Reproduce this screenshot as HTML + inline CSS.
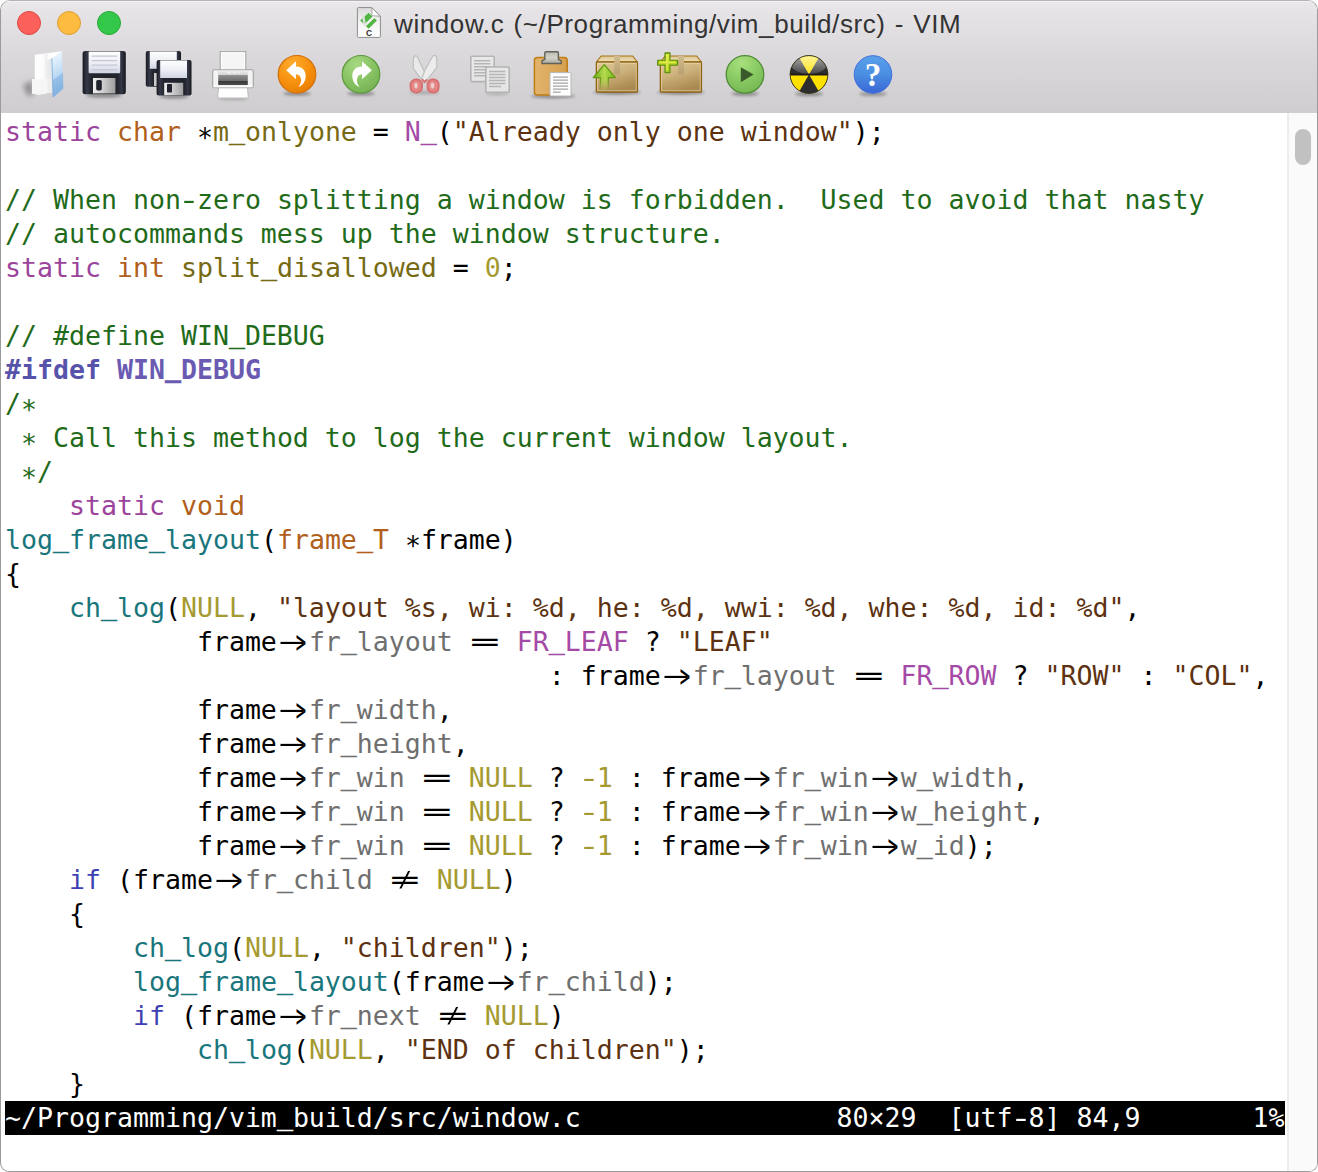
<!DOCTYPE html>
<html lang="en">
<head>
<meta charset="utf-8">
<title>window.c (~/Programming/vim_build/src) - VIM</title>
<style>
html,body{margin:0;padding:0;background:#fff;}
body{width:1318px;height:1172px;overflow:hidden;position:relative;}
#win{position:absolute;left:0;top:0;width:1316px;height:1170px;border:1px solid #9b9b9b;border-top-color:#b4b4b4;border-radius:10px 10px 9px 9px;overflow:hidden;background:#fff;}
#chrome{position:absolute;left:0;top:0;width:1316px;height:112px;background:linear-gradient(#ebe9eb 0px,#e6e4e6 8px,#d9d7d9 60px,#cfcdcf 112px);box-shadow:inset 0 1px 0 #f4f3f4;}
.tl{position:absolute;top:10px;width:24px;height:24px;border-radius:50%;box-sizing:border-box;}
#tl1{left:16px;background:#fc605b;border:1px solid #df4744;}
#tl2{left:56px;background:#fdbc40;border:1px solid #de9f34;}
#tl3{left:96px;background:#34c84a;border:1px solid #27aa35;}
#title{position:absolute;left:393px;top:7px;height:32px;line-height:32px;font-family:"Liberation Sans",sans-serif;font-size:26px;color:#333;white-space:pre;letter-spacing:0.6px;word-spacing:1.4px;}
#tbsvg{position:absolute;left:-1px;top:-1px;}
#text{position:absolute;left:4px;top:114px;width:1280px;font-family:"DejaVu Sans Mono","Liberation Mono",monospace;font-size:26.575px;line-height:34px;color:#000;font-variant-ligatures:none;}
.ln{height:34px;width:1280px;overflow:visible;white-space:pre;}
.sl{background:#000;color:#fff;}
.u,.as{font-style:normal;position:relative;}
.u{top:-2px;-webkit-text-stroke:0.5px currentColor;}
.as{top:6px;}
.hy{font-style:normal;display:inline-block;transform:scaleX(1.4);}
.lg{display:inline-block;width:32px;height:34px;position:relative;vertical-align:top;}
.lg i{position:absolute;left:0;top:0;width:32px;height:34px;text-align:center;font-style:normal;transform-origin:16px 17px;}
.a1{transform:translate(-1px,-1px) scale(3.4,1);}
.a2{transform:translate(8px,0px) scale(0.65,1.2);}
.e1{transform:translate(0px,0.4px) scale(1.86,1);}
.e2{transform:translate(0px,0px) scale(0.85,0.8);}
#sb{position:absolute;left:1286px;top:112px;width:30px;height:1060px;background:#fafafa;border-left:2px solid #ececec;box-sizing:border-box;}
#knob{position:absolute;left:1294px;top:128px;width:16px;height:36px;border-radius:8px;background:#c1c1c1;}
.st{color:#9c449c}
.ty{color:#b0601c}
.id{color:#776a14}
.mc{color:#a44aa6}
.str{color:#5c3211}
.cm{color:#1f6b1a}
.nu{color:#a59a32}
.pp{color:#5752aa}
.pd{color:#6a5ab2}
.fn{color:#19767c}
.mb{color:#6f6f6f}
.kw{color:#3f3fb4}
</style>
</head>
<body>
<div id="win">
<div id="chrome">
<div class="tl" id="tl1"></div><div class="tl" id="tl2"></div><div class="tl" id="tl3"></div>
<div id="title">window.c (~/Programming/vim_build/src) - VIM</div>
<svg id="tbsvg" width="1318" height="112" viewBox="0 0 1318 112">
<defs>
<filter id="b1" x="-30%" y="-100%" width="160%" height="300%"><feGaussianBlur stdDeviation="1.6"/></filter>
<filter id="b2" x="-50%" y="-50%" width="200%" height="200%"><feGaussianBlur stdDeviation="2.5"/></filter>
<linearGradient id="gBlue" x1="0" y1="0" x2="0.15" y2="1"><stop offset="0" stop-color="#f6fbff"/><stop offset="0.25" stop-color="#ddeefb"/><stop offset="0.6" stop-color="#b9d8f3"/><stop offset="1" stop-color="#8fbde8"/></linearGradient>
<linearGradient id="gWhite" x1="0" y1="0" x2="1" y2="0"><stop offset="0" stop-color="#ffffff"/><stop offset="0.7" stop-color="#fbfbfb"/><stop offset="1" stop-color="#e9e9e9"/></linearGradient>
<linearGradient id="gLabel" x1="0" y1="0" x2="0" y2="1"><stop offset="0" stop-color="#ffffff"/><stop offset="0.6" stop-color="#e9ecf3"/><stop offset="1" stop-color="#cfd5e2"/></linearGradient>
<linearGradient id="gFloppy" x1="0" y1="0" x2="1" y2="0"><stop offset="0" stop-color="#171920"/><stop offset="0.1" stop-color="#363a48"/><stop offset="0.2" stop-color="#24262f"/><stop offset="0.8" stop-color="#22242d"/><stop offset="0.9" stop-color="#343745"/><stop offset="1" stop-color="#15171d"/></linearGradient>
<linearGradient id="gShut" x1="0" y1="0" x2="1" y2="0"><stop offset="0" stop-color="#efefef"/><stop offset="0.5" stop-color="#c9c9c9"/><stop offset="1" stop-color="#9e9e9e"/></linearGradient>
<linearGradient id="gSlot" x1="0" y1="0" x2="0" y2="1"><stop offset="0" stop-color="#e6e6e6"/><stop offset="0.24" stop-color="#d4d4d4"/><stop offset="0.28" stop-color="#909090"/><stop offset="0.68" stop-color="#6b6b6b"/><stop offset="0.71" stop-color="#383838"/><stop offset="0.93" stop-color="#4c4c4c"/><stop offset="0.96" stop-color="#c4c4c4"/><stop offset="1" stop-color="#e0e0e0"/></linearGradient>
<radialGradient id="gOrange" cx="0.38" cy="0.25" r="0.8"><stop offset="0" stop-color="#ffab2e"/><stop offset="0.6" stop-color="#f6900d"/><stop offset="0.92" stop-color="#ea8106"/><stop offset="1" stop-color="#d9740a"/></radialGradient>
<radialGradient id="gGreen" cx="0.38" cy="0.25" r="0.8"><stop offset="0" stop-color="#a6d982"/><stop offset="0.6" stop-color="#86c162"/><stop offset="0.92" stop-color="#78b455"/><stop offset="1" stop-color="#65a246"/></radialGradient>
<radialGradient id="gGreen2" cx="0.4" cy="0.2" r="0.85"><stop offset="0" stop-color="#a8e07e"/><stop offset="0.55" stop-color="#88c962"/><stop offset="0.9" stop-color="#79ba55"/><stop offset="1" stop-color="#5d9c40"/></radialGradient>
<linearGradient id="gHelp" x1="0" y1="0" x2="0" y2="1"><stop offset="0" stop-color="#5aa0ea"/><stop offset="0.5" stop-color="#4a8ee2"/><stop offset="1" stop-color="#3a66d6"/></linearGradient>
<linearGradient id="gBoxF" x1="0" y1="0" x2="0.4" y2="1"><stop offset="0" stop-color="#e0cb9a"/><stop offset="0.5" stop-color="#cbb07a"/><stop offset="1" stop-color="#aa8a50"/></linearGradient>
<linearGradient id="gBoxT" x1="0" y1="0" x2="0" y2="1"><stop offset="0" stop-color="#dcc594"/><stop offset="1" stop-color="#efe0b9"/></linearGradient>
<linearGradient id="gTape" x1="0" y1="0" x2="0" y2="1"><stop offset="0" stop-color="#d2bb8c"/><stop offset="1" stop-color="#b99f72"/></linearGradient>
<linearGradient id="gArrow" x1="0" y1="0" x2="1" y2="0"><stop offset="0" stop-color="#6aa516"/><stop offset="0.5" stop-color="#b4dc4e"/><stop offset="1" stop-color="#79b41c"/></linearGradient>
<linearGradient id="gStem" x1="0" y1="0" x2="0" y2="1"><stop offset="0" stop-color="#fff" stop-opacity="1"/><stop offset="1" stop-color="#fff" stop-opacity="0"/></linearGradient>
<mask id="mStem"><rect x="590" y="60" width="30" height="34" fill="url(#gStemM)"/></mask>
<linearGradient id="gStemM" x1="0" y1="60" x2="0" y2="94" gradientUnits="userSpaceOnUse"><stop offset="0" stop-color="#fff"/><stop offset="0.5" stop-color="#fff"/><stop offset="0.92" stop-color="#000"/></linearGradient>
<linearGradient id="gPlus" x1="0" y1="0" x2="0" y2="1"><stop offset="0" stop-color="#e2ea3a"/><stop offset="1" stop-color="#9fc414"/></linearGradient>
<linearGradient id="gClipb" x1="0" y1="0" x2="1" y2="0"><stop offset="0" stop-color="#e2b36c"/><stop offset="1" stop-color="#d6a050"/></linearGradient>
<linearGradient id="gClip" x1="0" y1="0" x2="0" y2="1"><stop offset="0" stop-color="#b9b9ae"/><stop offset="0.5" stop-color="#d3d3ca"/><stop offset="1" stop-color="#a9a99f"/></linearGradient>
<linearGradient id="gGloss" x1="0" y1="0" x2="0" y2="1"><stop offset="0" stop-color="#fff" stop-opacity="0.75"/><stop offset="1" stop-color="#fff" stop-opacity="0.12"/></linearGradient>
<clipPath id="cRad"><circle cx="809" cy="74.5" r="18.6"/></clipPath>
</defs>


<!-- doc icon -->
<g>
<linearGradient id="gDoc" x1="0" y1="0" x2="0" y2="1"><stop offset="0" stop-color="#dcdcdc"/><stop offset="0.55" stop-color="#f4f4f4"/><stop offset="1" stop-color="#ffffff"/></linearGradient>
<path d="M358.4,7.6 H371.8 L380.4,16.2 V36.4 Q380.4,37.4 379.4,37.4 H358.4 Q357.4,37.4 357.4,36.4 V8.6 Q357.4,7.6 358.4,7.6 Z" fill="url(#gDoc)" stroke="#8c8c8c" stroke-width="1"/>
<path d="M368.6,12.8 L376.9,20.6 L368.6,28.7 L360.2,20.6 Z" fill="#4fb543"/>
<path d="M375.6,13.6 L377.4,15.2 L365.6,26.6 L363.8,25 Z" fill="#f1f1f1"/>
<path d="M361.6,14.6 L364.2,14.2 L366.2,25.4 L363.8,26.4 Z" fill="#e3e3e3" opacity="0.9"/>
<path d="M371.8,7.8 L380.2,16.2 L373.2,15.8 C372.2,15.6 372,15 372,14.2 Z" fill="#ffffff" stroke="#8f8f8f" stroke-width="0.8" stroke-linejoin="round"/>
<text x="369" y="35.8" text-anchor="middle" font-family="'Liberation Sans',sans-serif" font-weight="bold" font-size="8.4" fill="#2e2e2e">C</text>
</g>

<!-- 1: open folder -->
<g>
<path d="M23,85 L33,80 L33,95.5 L27,95.5 Z" fill="#000" opacity="0.3" filter="url(#b2)"/>
<path d="M34.9,54.9 L61.6,51.2 L62,60 L52.6,92 L38.9,94.7 L32.2,93.6 L32,79.2 L34.9,78.9 Z" fill="#ffffff"/>
<path d="M34.9,54.9 L47.4,53.2 L47.4,79.4 L34.9,78.9 Z" fill="url(#gWhite)"/>
<path d="M47.3,59.9 L51.7,58.2 L52.4,80 L47.4,79.6 Z" fill="#e9eaeb"/>
<path d="M32,79.2 L47.4,79.6 L52.6,80 L52.8,92 L38.9,94.7 L32.2,93.6 Z" fill="#f6f6f6"/>
<path d="M47.4,79.6 L52.6,80 L52.8,92 L47.6,93 Z" fill="#ededee"/>
<path d="M51.6,58 L61.9,51 L63.3,88.5 L53,97.4 Z" fill="url(#gBlue)"/>
<path d="M52.5,80.6 L63,72.6 L63.3,88.5 L53,97.4 Z" fill="#6fa4dc" opacity="0.45"/>
<path d="M51.8,58.4 L53.1,97" stroke="#7aa9da" stroke-width="0.9" opacity="0.9"/>
</g>

<!-- 2: floppy -->
<g>
<ellipse cx="104" cy="95.5" rx="18" ry="2" fill="#000" opacity="0.35" filter="url(#b1)"/>
<rect x="82.6" y="51" width="43.2" height="43.2" rx="2.5" fill="url(#gFloppy)"/>
<rect x="88.6" y="51.6" width="31.6" height="21.6" rx="1" fill="url(#gLabel)"/>
<g stroke="#c3c8d3" stroke-width="1.3"><path d="M91.5,56.2H117.2M91.5,60.6H117.2M91.5,65.2H117.2M91.5,69.8H117.2"/></g>
<rect x="93" y="78" width="22.4" height="15.4" fill="url(#gShut)"/>
<rect x="96.2" y="80" width="5.6" height="10.4" rx="1.6" fill="#1f222c"/>
</g>

<!-- 3: save all (two floppies) -->
<g>
<ellipse cx="174" cy="96.6" rx="15" ry="2" fill="#000" opacity="0.35" filter="url(#b1)"/>
<rect x="145.8" y="51" width="35.2" height="35.8" rx="2" fill="url(#gFloppy)"/>
<rect x="149.8" y="51.4" width="27" height="17.4" fill="url(#gLabel)"/>
<rect x="154" y="73" width="6" height="13" fill="#c9c9c9"/>
<rect x="156.6" y="60" width="34.9" height="35.6" rx="2" fill="url(#gFloppy)"/>
<rect x="160.2" y="60.4" width="26.8" height="17.6" fill="url(#gLabel)"/>
<rect x="164.2" y="82.8" width="19" height="12.4" fill="url(#gShut)"/>
<rect x="167" y="84" width="5" height="8.6" rx="0.8" fill="#1f222c"/>
</g>

<!-- 4: printer -->
<g>
<ellipse cx="233" cy="98.6" rx="15" ry="1.2" fill="#000" opacity="0.25" filter="url(#b1)"/>
<rect x="220.2" y="51.6" width="25.6" height="20" fill="#f5f5f5" stroke="#adadad" stroke-width="1.2"/>
<rect x="221.4" y="52.8" width="23.2" height="17" fill="none" stroke="#fff" stroke-width="0.8"/>
<path d="M218.6,87 L247.4,87 L248.4,98 L217.6,98 Z" fill="#fefefe" stroke="#bdbdbd" stroke-width="1"/>
<rect x="212.7" y="69.7" width="40.6" height="18" rx="1.8" fill="#f3f3f3" stroke="#a2a2a2" stroke-width="1.1"/>
<rect x="218.2" y="71.3" width="29.6" height="14.4" fill="url(#gSlot)"/>
<path d="M227,72.8H231M232.4,72.8H236.4M237.8,72.8H239.8" stroke="#fff" stroke-width="1" opacity="0.8"/>
<path d="M213.4,86.4H252.6" stroke="#fff" stroke-width="1.6" opacity="0.9"/>
</g>

<!-- 5: undo -->
<g>
<ellipse cx="297" cy="93.6" rx="14" ry="2" fill="#000" opacity="0.35" filter="url(#b1)"/>
<circle cx="297" cy="74.3" r="18.8" fill="url(#gOrange)" stroke="#d26f0a" stroke-width="1.2"/>
<path d="M286.2,70.2 L296,61.2 L296,66.6 C303.5,66.8 306.2,72 305.6,77.4 C305,82.4 302,85.6 298.2,87 C300.8,84 302,80.6 300.4,77.2 C299.4,75 297.8,74.2 296,74.2 L296,79.2 Z" fill="#fff"/>
</g>

<!-- 6: redo -->
<g>
<ellipse cx="361" cy="93.6" rx="14" ry="2" fill="#000" opacity="0.35" filter="url(#b1)"/>
<circle cx="361" cy="74.3" r="18.8" fill="url(#gGreen)" stroke="#5a983c" stroke-width="1.2"/>
<path d="M371.8,70.2 L362,61.2 L362,66.6 C354.5,66.8 351.8,72 352.4,77.4 C353,82.4 356,85.6 359.8,87 C357.2,84 356,80.6 357.6,77.2 C358.6,75 360.2,74.2 362,74.2 L362,79.2 Z" fill="#fff"/>
</g>

<!-- 7: cut (disabled) -->
<g>
<ellipse cx="424.5" cy="92.6" rx="15" ry="1.6" fill="#000" opacity="0.22" filter="url(#b1)"/>
<path d="M415.5,55.8 C414,56.2 413.3,57.8 413.3,60 L413.3,68.2 L421.6,79.6 L426.4,78 L425.2,73.4 L417.8,57.8 C417.1,56.2 416.2,55.6 415.5,55.8 Z" fill="#e9e9e9" stroke="#bcbcbc" stroke-width="1.1" stroke-linejoin="round"/>
<path d="M434.2,55.5 C433.2,55.5 432.6,56.2 432.1,57.2 L424.8,70.4 L421.8,78.6 L424.8,81.4 L428.6,78.2 L436.8,67.4 L436.8,59 C436.8,57 435.6,55.5 434.2,55.5 Z" fill="#ececec" stroke="#bcbcbc" stroke-width="1.1" stroke-linejoin="round"/>
<path d="M422,79.4 L424.6,82 L427.2,79.6" fill="none" stroke="#d67272" stroke-width="2"/>
<rect x="410.4" y="79.4" width="11.8" height="13.2" rx="5.4" fill="#e28484" stroke="#d66e6e" stroke-width="1.6"/>
<rect x="427.4" y="79.4" width="11.4" height="13.2" rx="5.2" fill="#e28484" stroke="#d66e6e" stroke-width="1.6"/>
<rect x="414.2" y="82.8" width="3.4" height="5.6" rx="1.5" fill="#ecd6d6" stroke="#eda2a2" stroke-width="0.9"/>
<rect x="430.8" y="82.8" width="3.4" height="5.6" rx="1.5" fill="#ecd6d6" stroke="#eda2a2" stroke-width="0.9"/>
</g>

<!-- 8: copy (disabled) -->
<g opacity="0.55">
<ellipse cx="497" cy="93.6" rx="12" ry="1.6" fill="#000" opacity="0.3" filter="url(#b1)"/>
<rect x="470.8" y="56.2" width="23.4" height="25.4" rx="1" fill="#f6f6f6" stroke="#9a9a9a" stroke-width="1.6"/>
<g stroke="#9c9c9c" stroke-width="1.5"><path d="M474,60.8H490.4M474,63.8H490.4M474,66.8H490.4M474,69.8H490.4M474,72.8H490.4M474,75.8H490.4"/></g>
<rect x="485.8" y="67" width="23.4" height="25.2" rx="1" fill="#f6f6f6" stroke="#9a9a9a" stroke-width="1.6"/>
<g stroke="#9c9c9c" stroke-width="1.5"><path d="M489,71.4H505.4M489,74.4H505.4M489,77.4H505.4M489,80.4H505.4M489,83.4H505.4M489,86.4H501"/></g>
</g>

<!-- 9: paste -->
<g>
<ellipse cx="553" cy="96.2" rx="22" ry="2" fill="#000" opacity="0.35" filter="url(#b1)"/>
<rect x="534.4" y="57.4" width="32.8" height="37.6" rx="3" fill="url(#gClipb)" stroke="#bf7c12" stroke-width="1.5"/>
<path d="M546,51.7 H557.2 Q558.4,51.7 558.4,52.9 V59.4 L561.2,61 V63.5 H542 V61 L544.8,59.4 V52.9 Q544.8,51.7 546,51.7 Z" fill="url(#gClip)" stroke="#62625a" stroke-width="1.4"/>
<rect x="550" y="72.6" width="21" height="23.4" rx="0.8" fill="#fdfdfd" stroke="#b7b7b7" stroke-width="1"/>
<g stroke="#a4a4a4" stroke-width="1.3"><path d="M553,77.2H568M553,80.2H568M553,83.2H568M553,86.2H568M553,89.2H568M553,92.2H560.6"/></g>
</g>

<!-- 10: package + up arrow -->
<g>
<ellipse cx="617" cy="92.6" rx="24" ry="1.8" fill="#000" opacity="0.4" filter="url(#b1)"/>
<path d="M601.2,56 H632.6 L637.4,62 H596.4 Z" fill="url(#gBoxT)" stroke="#a87414" stroke-width="1.2" stroke-linejoin="round"/>
<rect x="596.4" y="62" width="41" height="30" rx="1" fill="url(#gBoxF)" stroke="#8f6210" stroke-width="1.4"/>
<rect x="597.6" y="63.2" width="38.6" height="27.6" fill="none" stroke="#f2e4bd" stroke-width="0.8" opacity="0.7"/>
<path d="M614.2,56 H620 V74.6 H614.2 Z" fill="url(#gTape)"/>
<g mask="url(#mStem)">
<path d="M604.3,64.6 L615.4,77.6 L608.4,77.6 L608.4,91 L600.4,91 L600.4,77.6 L593.2,77.6 Z" fill="url(#gArrow)" stroke="#5f9910" stroke-width="1.2" stroke-linejoin="round"/>
</g>
</g>

<!-- 11: package + plus -->
<g>
<ellipse cx="681" cy="92.6" rx="24" ry="1.8" fill="#000" opacity="0.4" filter="url(#b1)"/>
<path d="M665.2,56 H696.6 L701.4,62 H660.4 Z" fill="url(#gBoxT)" stroke="#a87414" stroke-width="1.2" stroke-linejoin="round"/>
<rect x="660.4" y="62" width="41" height="30" rx="1" fill="url(#gBoxF)" stroke="#8f6210" stroke-width="1.4"/>
<rect x="661.6" y="63.2" width="38.6" height="27.6" fill="none" stroke="#f2e4bd" stroke-width="0.8" opacity="0.7"/>
<path d="M678.2,56 H684 V74.6 H678.2 Z" fill="url(#gTape)"/>
<path d="M665.2,53 H669.8 V60.4 H677.4 V65 H669.8 V72.6 H665.2 V65 H657.8 V60.4 H665.2 Z" fill="#5a8d0b" stroke="#5a8d0b" stroke-width="1.5" stroke-linejoin="round"/>
<path d="M665.9,53.9 H669.1 V61.1 H676.5 V64.3 H669.1 V71.7 H665.9 V64.3 H658.7 V61.1 H665.9 Z" fill="url(#gPlus)" stroke="#c6e03c" stroke-width="0.5" stroke-linejoin="round"/>
<path d="M667,54.6 V70.8" stroke="#eef45a" stroke-width="1.3" opacity="0.9"/><path d="M659.4,62.4 H675.8" stroke="#eef45a" stroke-width="1.1" opacity="0.7"/>
</g>

<!-- 12: play -->
<g>
<ellipse cx="745" cy="93.8" rx="14" ry="2" fill="#000" opacity="0.35" filter="url(#b1)"/>
<circle cx="745" cy="74.4" r="18.8" fill="url(#gGreen2)" stroke="#4f8c36" stroke-width="1.3"/>
<path d="M740.8,67.2 L753.6,74.6 L740.8,82.2 Z" fill="#3b5a2b"/>
</g>

<!-- 13: radiation -->
<g>
<ellipse cx="809" cy="94" rx="14" ry="2" fill="#000" opacity="0.35" filter="url(#b1)"/>
<circle cx="809" cy="74.5" r="19.2" fill="#2c2c2c"/>
<g clip-path="url(#cRad)">
<rect x="789" y="54" width="40" height="41" fill="#2e2e2e"/>
<path d="M809,74.5 L797,53.7 L821,53.7 Z" fill="#ffe100"/>
<path d="M809,74.5 L785,74.5 L797,95.3 Z" fill="#ffe100"/>
<path d="M809,74.5 L833,74.5 L821,95.3 Z" fill="#ffe100"/>
<path d="M789,73.6H829V75.4H789Z" fill="#1c1c1c"/>
<ellipse cx="809" cy="62" rx="19" ry="12" fill="url(#gGloss)"/>
</g>
<circle cx="809" cy="74.5" r="18.9" fill="none" stroke="#3a3300" stroke-width="0.8" opacity="0.7"/>
</g>

<!-- 14: help -->
<g>
<ellipse cx="873" cy="94" rx="14" ry="2" fill="#000" opacity="0.3" filter="url(#b1)"/>
<circle cx="873" cy="74.5" r="18.8" fill="url(#gHelp)" stroke="#3f6fdc" stroke-width="1"/>
<text x="873" y="86.4" text-anchor="middle" font-family="'Liberation Serif','DejaVu Serif',serif" font-weight="bold" font-size="33" fill="#fff">?</text>
</g>
</svg>

</div>
<div id="text">
<div class="ln"><span class="st">static</span> <span class="ty">char</span> <i class="as">*</i><span class="id">m<i class="u">_</i>onlyone</span> = <span class="mc">N<i class="u">_</i></span>(<span class="str">"Already only one window"</span>);</div>
<div class="ln"> </div>
<div class="ln"><span class="cm">// When non<i class="hy">-</i>zero splitting a window is forbidden.  Used to avoid that nasty</span></div>
<div class="ln"><span class="cm">// autocommands mess up the window structure.</span></div>
<div class="ln"><span class="st">static</span> <span class="ty">int</span> <span class="id">split<i class="u">_</i>disallowed</span> = <span class="nu">0</span>;</div>
<div class="ln"> </div>
<div class="ln"><span class="cm">// #define WIN<i class="u">_</i>DEBUG</span></div>
<div class="ln"><b><span class="pp">#ifdef</span> <span class="pd">WIN<i class="u">_</i>DEBUG</span></b></div>
<div class="ln"><span class="cm">/<i class="as">*</i></span></div>
<div class="ln"><span class="cm"> <i class="as">*</i> Call this method to log the current window layout.</span></div>
<div class="ln"><span class="cm"> <i class="as">*</i>/</span></div>
<div class="ln">    <span class="st">static</span> <span class="ty">void</span></div>
<div class="ln"><span class="fn">log<i class="u">_</i>frame<i class="u">_</i>layout</span>(<span class="ty">frame<i class="u">_</i>T</span> <i class="as">*</i>frame)</div>
<div class="ln">{</div>
<div class="ln">    <span class="fn">ch<i class="u">_</i>log</span>(<span class="nu">NULL</span>, <span class="str">"layout %s, wi: %d, he: %d, wwi: %d, whe: %d, id: %d"</span>,</div>
<div class="ln">            frame<span class="lg ar"><i class="a1">-</i><i class="a2">&gt;</i></span><span class="mb">fr<i class="u">_</i>layout</span> <span class="lg eq"><i class="e1">=</i></span> <span class="mc">FR<i class="u">_</i>LEAF</span> ? <span class="str">"LEAF"</span></div>
<div class="ln">                                  : frame<span class="lg ar"><i class="a1">-</i><i class="a2">&gt;</i></span><span class="mb">fr<i class="u">_</i>layout</span> <span class="lg eq"><i class="e1">=</i></span> <span class="mc">FR<i class="u">_</i>ROW</span> ? <span class="str">"ROW"</span> : <span class="str">"COL"</span>,</div>
<div class="ln">            frame<span class="lg ar"><i class="a1">-</i><i class="a2">&gt;</i></span><span class="mb">fr<i class="u">_</i>width</span>,</div>
<div class="ln">            frame<span class="lg ar"><i class="a1">-</i><i class="a2">&gt;</i></span><span class="mb">fr<i class="u">_</i>height</span>,</div>
<div class="ln">            frame<span class="lg ar"><i class="a1">-</i><i class="a2">&gt;</i></span><span class="mb">fr<i class="u">_</i>win</span> <span class="lg eq"><i class="e1">=</i></span> <span class="nu">NULL</span> ? <span class="nu"><i class="hy">-</i>1</span> : frame<span class="lg ar"><i class="a1">-</i><i class="a2">&gt;</i></span><span class="mb">fr<i class="u">_</i>win</span><span class="lg ar"><i class="a1">-</i><i class="a2">&gt;</i></span><span class="mb">w<i class="u">_</i>width</span>,</div>
<div class="ln">            frame<span class="lg ar"><i class="a1">-</i><i class="a2">&gt;</i></span><span class="mb">fr<i class="u">_</i>win</span> <span class="lg eq"><i class="e1">=</i></span> <span class="nu">NULL</span> ? <span class="nu"><i class="hy">-</i>1</span> : frame<span class="lg ar"><i class="a1">-</i><i class="a2">&gt;</i></span><span class="mb">fr<i class="u">_</i>win</span><span class="lg ar"><i class="a1">-</i><i class="a2">&gt;</i></span><span class="mb">w<i class="u">_</i>height</span>,</div>
<div class="ln">            frame<span class="lg ar"><i class="a1">-</i><i class="a2">&gt;</i></span><span class="mb">fr<i class="u">_</i>win</span> <span class="lg eq"><i class="e1">=</i></span> <span class="nu">NULL</span> ? <span class="nu"><i class="hy">-</i>1</span> : frame<span class="lg ar"><i class="a1">-</i><i class="a2">&gt;</i></span><span class="mb">fr<i class="u">_</i>win</span><span class="lg ar"><i class="a1">-</i><i class="a2">&gt;</i></span><span class="mb">w<i class="u">_</i>id</span>);</div>
<div class="ln">    <span class="kw">if</span> (frame<span class="lg ar"><i class="a1">-</i><i class="a2">&gt;</i></span><span class="mb">fr<i class="u">_</i>child</span> <span class="lg ne"><i class="e1">=</i><i class="e2">/</i></span> <span class="nu">NULL</span>)</div>
<div class="ln">    {</div>
<div class="ln">        <span class="fn">ch<i class="u">_</i>log</span>(<span class="nu">NULL</span>, <span class="str">"children"</span>);</div>
<div class="ln">        <span class="fn">log<i class="u">_</i>frame<i class="u">_</i>layout</span>(frame<span class="lg ar"><i class="a1">-</i><i class="a2">&gt;</i></span><span class="mb">fr<i class="u">_</i>child</span>);</div>
<div class="ln">        <span class="kw">if</span> (frame<span class="lg ar"><i class="a1">-</i><i class="a2">&gt;</i></span><span class="mb">fr<i class="u">_</i>next</span> <span class="lg ne"><i class="e1">=</i><i class="e2">/</i></span> <span class="nu">NULL</span>)</div>
<div class="ln">            <span class="fn">ch<i class="u">_</i>log</span>(<span class="nu">NULL</span>, <span class="str">"END of children"</span>);</div>
<div class="ln">    }</div>
<div class="ln sl">~/Programming/vim<i class="u">_</i>build/src/window.c                80×29  [utf<i class="hy">-</i>8] 84,9       1%</div>
</div>
<div id="sb"></div><div id="knob"></div>
</div>
</body>
</html>
